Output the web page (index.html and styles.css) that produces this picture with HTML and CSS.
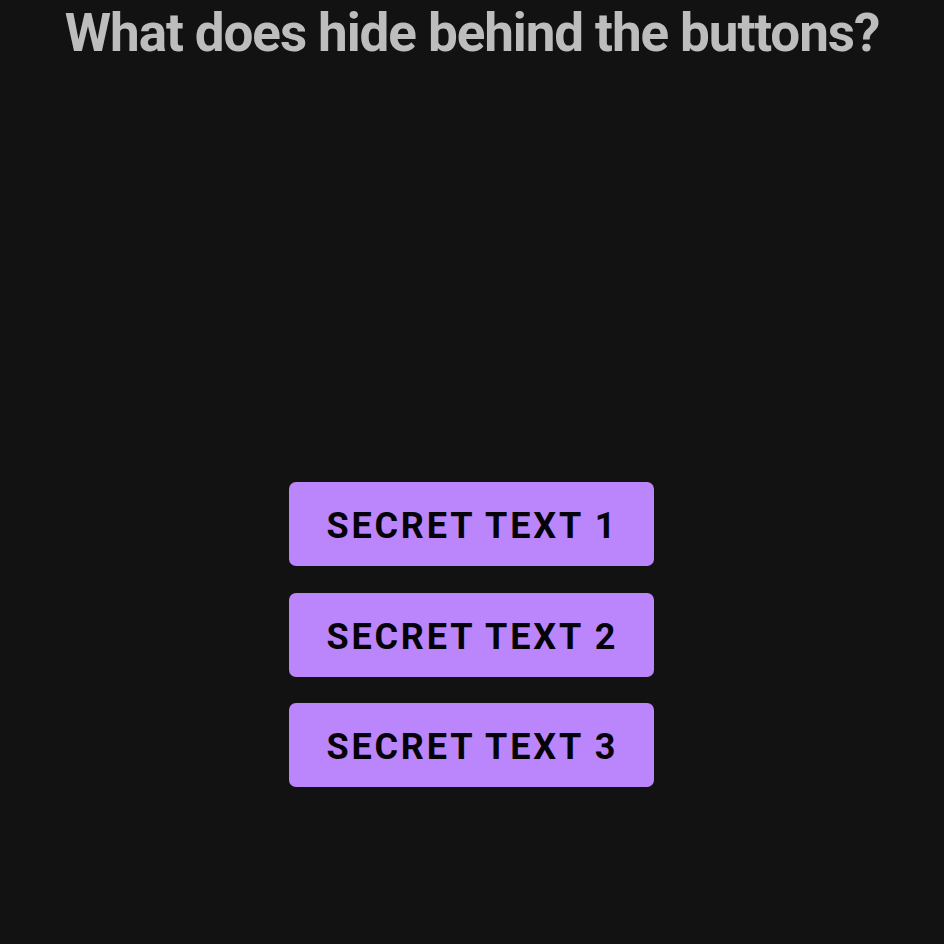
FILE: index.html
```html
<!DOCTYPE html>
<html>
<head>
<meta charset="utf-8">
<link rel="stylesheet" href="styles.css">
</head>
<body>
<main class="screen">
  <h1 class="title">What does hide behind the buttons?</h1>
  <div class="buttons">
    <button class="btn">SECRET TEXT 1</button>
    <button class="btn">SECRET TEXT 2</button>
    <button class="btn">SECRET TEXT 3</button>
  </div>
</main>
</body>
</html>
```
FILE: styles.css
```css
html, body {
  margin: 0;
  padding: 0;
  background: #121212;
}
.screen {
  width: 944px;
  height: 944px;
  display: flex;
  flex-direction: column;
  align-items: center;
  font-family: Roboto, "Noto Sans", sans-serif;
}
.title {
  margin: 0;
  padding-top: 3px;
  font-size: 53px;
  font-weight: 700;
  color: #bdbdbd;
  line-height: 60px;
  letter-spacing: -1.1px;
}
.buttons {
  margin-top: 419px;
  display: flex;
  flex-direction: column;
  gap: 26.5px;
  margin-left: -2px;
}
.btn {
  width: 365px;
  height: 84px;
  border: none;
  border-radius: 7px;
  background: #bb86fc;
  color: #050308;
  font-family: Roboto, sans-serif;
  font-weight: 700;
  font-size: 36px;
  letter-spacing: 2.8px;
  padding: 4px 0 0 2.8px;
}
```
